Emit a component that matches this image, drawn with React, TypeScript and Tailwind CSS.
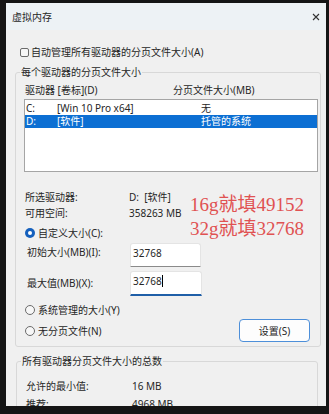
const ui = "font-['Noto_Sans','Noto_Sans_CJK_SC',sans-serif]";

function Radio({ on }: { on?: boolean }) {
  if (on) {
    return (
      <span className="w-[10px] h-[10px] rounded-full bg-[#1560bd] flex items-center justify-center shrink-0">
        <span className="w-[4px] h-[4px] rounded-full bg-white" />
      </span>
    );
  }
  return <span className="w-[10px] h-[10px] rounded-full border border-[#6b6b6b] bg-[#f7f7f7] shrink-0" />;
}

const drives = [
  { letter: "C:", label: "[Win 10 Pro x64]", size: "无", selected: false },
  { letter: "D:", label: "[软件]", size: "托管的系统", selected: true },
];

export default function App() {
  return (
    <div className="relative w-[329px] h-[414px] bg-[#151515] overflow-hidden pt-[3px] pl-[6px]">
      <div className={`w-[320px] h-[403px] bg-[#f0f0f0] overflow-hidden text-[10px] leading-[14px] text-[#262626] ${ui}`}>
        {/* title bar */}
        <div className="h-[27px] flex items-center justify-between pl-[6px] pr-[6px] bg-[#edf2f5]">
          <span>虚拟内存</span>
          <svg width="8" height="8" viewBox="0 0 8 8" className="text-[#333]">
            <path d="M1 1L7 7M7 1L1 7" stroke="currentColor" strokeWidth="1.1" />
          </svg>
        </div>

        <div className="mt-[15px] ml-[14px] h-[14px] flex items-center gap-[2px]">
          <span className="w-[9px] h-[9px] rounded-[2px] border border-[#6b6b6b] bg-[#f7f7f7]" />
          <span>自动管理所有驱动器的分页文件大小(A)</span>
        </div>

        <fieldset className="mt-[6px] ml-[9px] w-[306px] border border-[#d8d8d8] rounded-[3px]">
          <legend className="ml-[4px] px-[1px] leading-[14px]">每个驱动器的分页文件大小</legend>
          <div className="pl-[8px] pr-[2px] pb-[4px]">
            <div className="mt-[4px] h-[14px] flex">
              <span className="w-[149px] pl-[1px]">驱动器 [卷标](D)</span>
              <span>分页文件大小(MB)</span>
            </div>

            <div className="mt-[2px] h-[73px] bg-white border border-[#a5a5a5] pt-[2px]">
              {drives.map((d) => (
                <div
                  key={d.letter}
                  className={`h-[13px] leading-[13px] flex ${d.selected ? "bg-[#0c6fd3] text-white" : ""}`}
                >
                  <span className="w-[32px] pl-[1px]">{d.letter}</span>
                  <span className="w-[144px]">{d.label}</span>
                  <span>{d.size}</span>
                </div>
              ))}
            </div>

            <div className="mt-[17px] h-[16px] leading-[16px] flex">
              <span className="w-[105px] pl-[1px]">所选驱动器:</span>
              <span>D:&nbsp;&nbsp;[软件]</span>
            </div>
            <div className="h-[16px] leading-[16px] flex">
              <span className="w-[105px] pl-[1px]">可用空间:</span>
              <span>358263 MB</span>
            </div>

            <div className="mt-[5px] h-[14px] flex items-center gap-[3px] pl-[1px]">
              <Radio on />
              <span>自定义大小(C):</span>
            </div>

            <div className="mt-[3px] h-[24px] flex items-start">
              <span className="w-[106px] pl-[3px] pt-[2px]">初始大小(MB)(I):</span>
              <div className="w-[71px] h-[24px] bg-white rounded-t-[3px] border border-[#e4e4e4] border-b-[#8a8a8a] pl-[2px] pt-[2px]">
                32768
              </div>
            </div>

            <div className="mt-[4px] h-[25px] flex items-start">
              <span className="w-[106px] pl-[3px] pt-[5px]">最大值(MB)(X):</span>
              <div className="w-[72px] h-[25px] bg-white rounded-t-[3px] border border-[#e4e4e4] border-b-2 border-b-[#1f5fa8] pl-[2px] pt-[2px] flex items-start">
                <span>32768</span>
                <span className="w-[1px] h-[12px] mt-[1px] bg-black" />
              </div>
            </div>

            <div className="mt-[7px] h-[14px] flex items-center gap-[3px] pl-[1px]">
              <Radio />
              <span>系统管理的大小(Y)</span>
            </div>

            <div className="mt-[2px] h-[23px] flex items-center justify-between">
              <div className="flex items-center gap-[3px] pl-[1px]">
                <Radio />
                <span>无分页文件(N)</span>
              </div>
              <button className="w-[71px] h-[23px] mr-[8px] rounded-[4px] border border-[#4d8fd9] bg-[#fdfdfd]">
                设置(S)
              </button>
            </div>
          </div>
        </fieldset>

        <fieldset className="mt-[7px] ml-[10px] w-[302px] border border-[#d8d8d8] rounded-[3px]">
          <legend className="ml-[4px] px-[1px] leading-[14px]">所有驱动器分页文件大小的总数</legend>
          <div className="pl-[9px] pb-[6px]">
            <div className="mt-[11px] h-[14px] flex">
              <span className="w-[106px]">允许的最小值:</span>
              <span>16 MB</span>
            </div>
            <div className="mt-[4px] h-[14px] flex">
              <span className="w-[106px]">推荐:</span>
              <span>4968 MB</span>
            </div>
          </div>
        </fieldset>
      </div>

      {/* video annotation laid over the dialog */}
      <div className="absolute left-[190px] top-[193px] text-[19px] leading-[24px] text-[#e05252] whitespace-nowrap font-['Liberation_Serif','Noto_Sans_CJK_SC',serif]">
        <div>16g就填49152</div>
        <div>32g就填32768</div>
      </div>
    </div>
  );
}
